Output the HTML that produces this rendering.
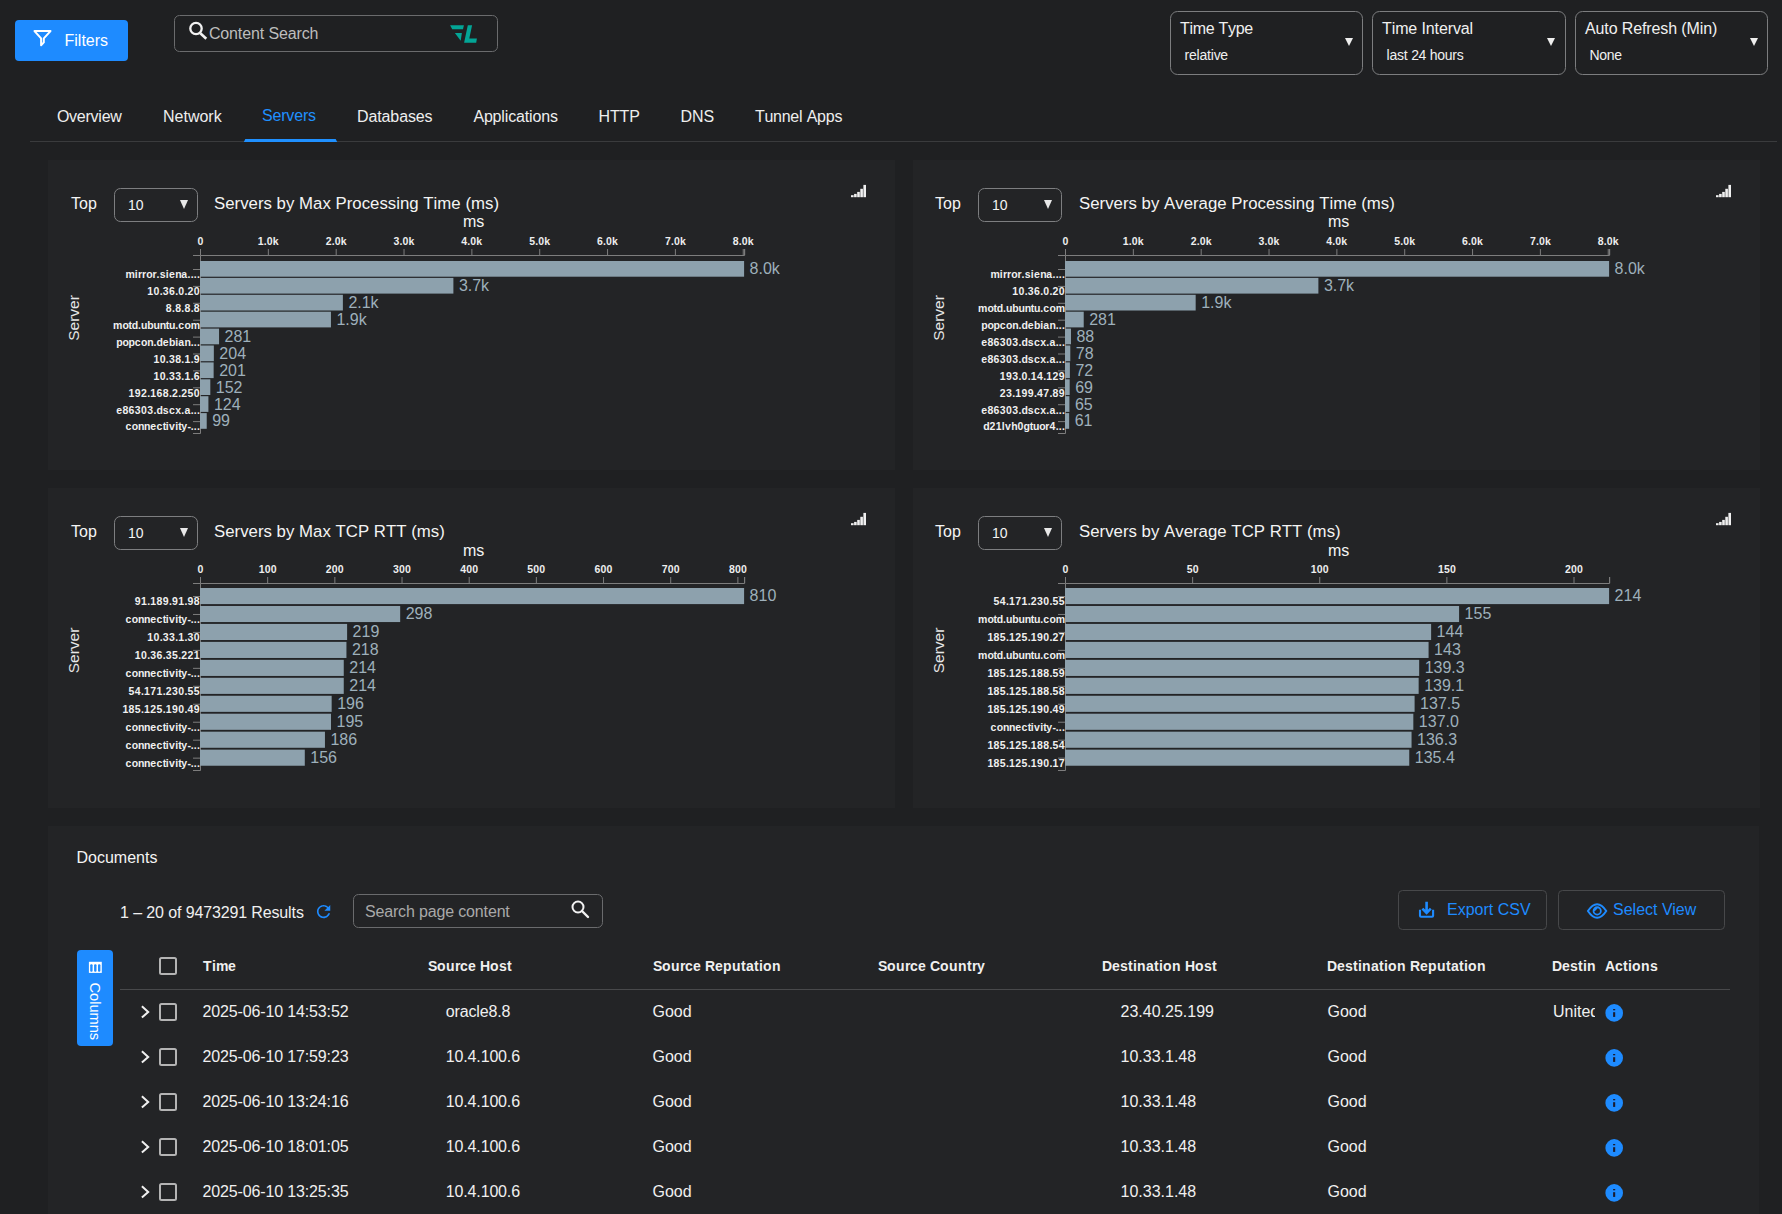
<!DOCTYPE html>
<html><head><meta charset="utf-8"><title>Servers</title>
<style>
html,body{margin:0;padding:0;background:#1f2022;width:1782px;height:1214px;overflow:hidden;}
svg{position:absolute;left:0;top:0;font-family:"Liberation Sans",sans-serif;}
</style></head><body>
<svg width="1782" height="1214" viewBox="0 0 1782 1214">
<rect x="15" y="20" width="113" height="41" rx="4" fill="#1e8bff"/>
<path d="M34.5 31.1 H50.5 L43.8 38.4 V42.4 L41.1 45.2 V38.4 Z" fill="none" stroke="#fff" stroke-width="2" stroke-linejoin="round"/>
<text x="64.5" y="46" font-size="16" fill="#fff" font-weight="normal" text-anchor="start" >Filters</text>
<rect x="174.5" y="15.5" width="323" height="36" rx="5" fill="none" stroke="#6a6b6d" stroke-width="1"/>
<circle cx="196" cy="28.5" r="5.7" fill="none" stroke="#f2f2f2" stroke-width="2.3"/><path d="M200.3 33.2 L206.3 38.8" stroke="#f2f2f2" stroke-width="2.6"/>
<text x="209.00 220.36 229.11 237.85 242.22 250.97 259.72 264.09 268.46 278.95 287.69 296.44 301.68 309.54" y="39" font-size="16" fill="#bdbdbd" font-weight="normal" >Content Search</text>
<path d="M450.1 25.2 H463.9 L463 29.3 H452.2 Z" fill="#03a596"/><path d="M454.9 32.9 H461.9 L460.7 40.8 Z" fill="#03a596"/><path d="M467.8 25.2 H472.1 L469.3 38.5 H476.9 L476.2 42.8 H464.1 Z" fill="#03a596"/>
<rect x="1170.5" y="11.5" width="192" height="63" rx="7" fill="none" stroke="#7c7d7f" stroke-width="1"/>
<text x="1180.00 1189.43 1192.86 1205.72 1214.31 1218.60 1228.03 1235.75 1244.34" y="33.8" font-size="16" fill="#f0f0f0" font-weight="normal" >Time Type</text>
<text x="1184.50 1188.98 1196.45 1199.44 1206.91 1210.65 1213.63 1220.35" y="60" font-size="14" fill="#f0f0f0" font-weight="normal" >relative</text>
<path d="M1345 38 H1353 L1349 46 Z" fill="#eeeeee"/>
<rect x="1372.5" y="11.5" width="193" height="63" rx="7" fill="none" stroke="#7c7d7f" stroke-width="1"/>
<text x="1382.00 1391.63 1395.13 1408.26 1417.02 1421.40 1425.78 1434.54 1438.92 1447.69 1452.94 1460.82 1469.58" y="33.8" font-size="16" fill="#f0f0f0" font-weight="normal" >Time Interval</text>
<text x="1386.50 1389.49 1396.96 1403.68 1407.41 1411.15 1418.62 1426.10 1429.83 1437.31 1444.78 1452.26 1456.73" y="60" font-size="14" fill="#f0f0f0" font-weight="normal" >last 24 hours</text>
<path d="M1547 38 H1555 L1551 46 Z" fill="#eeeeee"/>
<rect x="1575.5" y="11.5" width="192" height="63" rx="7" fill="none" stroke="#7c7d7f" stroke-width="1"/>
<text x="1585.00 1595.51 1604.28 1608.66 1617.42 1621.80 1633.18 1641.95 1646.32 1651.57 1660.34 1668.22 1676.98 1681.36 1686.61 1699.74 1703.24 1712.00" y="33.8" font-size="16" fill="#f0f0f0" font-weight="normal" >Auto Refresh (Min)</text>
<text x="1589.50 1599.21 1606.68 1614.16" y="60" font-size="14" fill="#f0f0f0" font-weight="normal" >None</text>
<path d="M1750 38 H1758 L1754 46 Z" fill="#eeeeee"/>
<text x="57.00 69.03 76.77 85.38 90.53 98.26 101.70 110.31" y="121.5" font-size="16" fill="#eeeeee" font-weight="normal" >Overview</text>
<text x="163" y="121.5" font-size="16" fill="#eeeeee" font-weight="normal" text-anchor="start" >Network</text>
<text x="262.00 272.44 281.14 286.35 294.17 302.88 308.09" y="120.5" font-size="16" fill="#1f90ff" font-weight="normal" >Servers</text>
<text x="357.00 368.40 377.19 381.57 390.36 399.14 407.92 415.82 424.60" y="121.5" font-size="16" fill="#eeeeee" font-weight="normal" >Databases</text>
<text x="473.50 483.93 492.62 501.31 504.79 508.26 516.08 524.77 529.11 532.59 541.28 549.97" y="121.5" font-size="16" fill="#eeeeee" font-weight="normal" >Applications</text>
<text x="598.50 609.94 619.61 629.29" y="121.5" font-size="16" fill="#eeeeee" font-weight="normal" >HTTP</text>
<text x="680.50 691.94 703.38" y="121.5" font-size="16" fill="#eeeeee" font-weight="normal" >DNS</text>
<text x="755.00 764.48 773.11 781.74 790.37 799.01 802.45 806.77 817.12 825.75 834.38" y="121.5" font-size="16" fill="#eeeeee" font-weight="normal" >Tunnel Apps</text>
<rect x="30" y="141" width="1747" height="1" fill="#3a3b3d"/>
<path d="M243.8 142 L245.3 139 H335.7 L337.2 142 Z" fill="#1f90ff"/>
<rect x="48" y="160" width="847" height="310" fill="#232426"/>
<text x="71" y="209" font-size="16" fill="#f4f4f4" font-weight="normal" text-anchor="start" >Top</text>
<rect x="114.5" y="188.5" width="83" height="33" rx="6" fill="none" stroke="#7d7e80" stroke-width="1"/>
<text x="128" y="210" font-size="14" fill="#f4f4f4" font-weight="normal" text-anchor="start" >10</text>
<path d="M180 200 H188 L184 209 Z" fill="#e8e8e8"/>
<text x="214.00 225.22 234.57 240.17 248.58 257.93 263.53 271.94 276.61 285.96 294.37 299.04 313.05 322.41 330.81 335.49 346.70 352.30 361.66 370.06 379.42 387.83 396.23 399.97 409.32 418.68 423.35 433.62 437.36 451.36 460.72 465.39 470.99 485.00 493.41" y="208.6" font-size="16.8" fill="#f4f4f4" font-weight="normal" >Servers by Max Processing Time (ms)</text>
<text x="463" y="227" font-size="16" fill="#f4f4f4" font-weight="normal" text-anchor="start" >ms</text>
<rect x="851.0" y="195.2" width="2.6" height="2" fill="#f0f0f0"/>
<rect x="854.1" y="193.89999999999998" width="2.6" height="3.3" fill="#f0f0f0"/>
<rect x="857.2" y="191.89999999999998" width="2.6" height="5.3" fill="#f0f0f0"/>
<rect x="860.3" y="188.79999999999998" width="2.6" height="8.4" fill="#f0f0f0"/>
<rect x="863.4" y="184.89999999999998" width="2.6" height="12.3" fill="#f0f0f0"/>
<rect x="200.00" y="249.0" width="1" height="6" fill="#7d7d7d"/>
<text x="197.50" y="245.2" font-size="10.5" fill="#eeeeee" font-weight="bold">0</text>
<rect x="267.84" y="249.0" width="1" height="6" fill="#7d7d7d"/>
<text x="257.84 263.84 266.84 272.84" y="245.2" font-size="10.5" fill="#eeeeee" font-weight="bold">1.0k</text>
<rect x="335.69" y="249.0" width="1" height="6" fill="#7d7d7d"/>
<text x="325.69 331.69 334.69 340.69" y="245.2" font-size="10.5" fill="#eeeeee" font-weight="bold">2.0k</text>
<rect x="403.53" y="249.0" width="1" height="6" fill="#7d7d7d"/>
<text x="393.53 399.53 402.53 408.53" y="245.2" font-size="10.5" fill="#eeeeee" font-weight="bold">3.0k</text>
<rect x="471.37" y="249.0" width="1" height="6" fill="#7d7d7d"/>
<text x="461.37 467.37 470.37 476.37" y="245.2" font-size="10.5" fill="#eeeeee" font-weight="bold">4.0k</text>
<rect x="539.21" y="249.0" width="1" height="6" fill="#7d7d7d"/>
<text x="529.21 535.21 538.21 544.21" y="245.2" font-size="10.5" fill="#eeeeee" font-weight="bold">5.0k</text>
<rect x="607.06" y="249.0" width="1" height="6" fill="#7d7d7d"/>
<text x="597.06 603.06 606.06 612.06" y="245.2" font-size="10.5" fill="#eeeeee" font-weight="bold">6.0k</text>
<rect x="674.90" y="249.0" width="1" height="6" fill="#7d7d7d"/>
<text x="664.90 670.90 673.90 679.90" y="245.2" font-size="10.5" fill="#eeeeee" font-weight="bold">7.0k</text>
<rect x="742.74" y="249.0" width="1" height="6" fill="#7d7d7d"/>
<text x="732.74 738.74 741.74 747.74" y="245.2" font-size="10.5" fill="#eeeeee" font-weight="bold">8.0k</text>
<rect x="744.10" y="249.0" width="1" height="6" fill="#7d7d7d"/>
<path d="M193 255.5 H200.5 V433.5 H193" fill="none" stroke="#7d7d7d" stroke-width="1"/>
<path d="M200.5 249.0 V255.5 H744.6 V249.0" fill="none" stroke="#7d7d7d" stroke-width="1"/>
<rect x="200.00" y="261.00" width="544.10" height="15.7" fill="#8da1ad"/>
<rect x="193" y="269.00" width="7" height="1" fill="#7d7d7d"/>
<text x="125.48 134.80 137.90 142.04 146.18 152.39 156.53 159.63 165.84 168.95 175.16 181.37 187.58 190.68 193.79 196.89" y="278.30" font-size="10.5" fill="#f0f0f0" font-weight="bold">mirror.siena....</text>
<text x="749.60" y="274.30" font-size="16" fill="#9eb0bb" font-weight="normal" text-anchor="start" >8.0k</text>
<rect x="200.00" y="277.90" width="253.39" height="15.7" fill="#8da1ad"/>
<rect x="193" y="285.90" width="7" height="1" fill="#7d7d7d"/>
<text x="147.22 153.43 159.64 162.74 168.95 175.16 178.27 184.48 187.58 193.79" y="295.20" font-size="10.5" fill="#f0f0f0" font-weight="bold">10.36.0.20</text>
<text x="458.89" y="291.20" font-size="16" fill="#9eb0bb" font-weight="normal" text-anchor="start" >3.7k</text>
<rect x="200.00" y="294.80" width="142.88" height="15.7" fill="#8da1ad"/>
<rect x="193" y="302.80" width="7" height="1" fill="#7d7d7d"/>
<text x="165.84 172.06 175.16 181.37 184.47 190.69 193.79" y="312.10" font-size="10.5" fill="#f0f0f0" font-weight="bold">8.8.8.8</text>
<text x="348.38" y="308.10" font-size="16" fill="#9eb0bb" font-weight="normal" text-anchor="start" >2.1k</text>
<rect x="200.00" y="311.70" width="130.94" height="15.7" fill="#8da1ad"/>
<rect x="193" y="319.70" width="7" height="1" fill="#7d7d7d"/>
<text x="113.06 122.38 128.59 131.69 137.90 141.00 147.22 153.43 159.64 165.85 168.95 175.16 178.27 184.48 190.69" y="329.00" font-size="10.5" fill="#f0f0f0" font-weight="bold">motd.ubuntu.com</text>
<text x="336.44" y="325.00" font-size="16" fill="#9eb0bb" font-weight="normal" text-anchor="start" >1.9k</text>
<rect x="200.00" y="328.60" width="19.06" height="15.7" fill="#8da1ad"/>
<rect x="193" y="336.60" width="7" height="1" fill="#7d7d7d"/>
<text x="116.17 122.38 128.59 134.80 141.01 147.22 153.43 156.53 162.74 168.95 175.16 178.27 184.48 190.69 193.79 196.90" y="345.90" font-size="10.5" fill="#f0f0f0" font-weight="bold">popcon.debian...</text>
<text x="224.56" y="341.90" font-size="16" fill="#9eb0bb" font-weight="normal" text-anchor="start" >281</text>
<rect x="200.00" y="345.50" width="13.84" height="15.7" fill="#8da1ad"/>
<rect x="193" y="353.50" width="7" height="1" fill="#7d7d7d"/>
<text x="153.43 159.64 165.85 168.95 175.16 181.37 184.48 190.69 193.79" y="362.80" font-size="10.5" fill="#f0f0f0" font-weight="bold">10.38.1.9</text>
<text x="219.34" y="358.80" font-size="16" fill="#9eb0bb" font-weight="normal" text-anchor="start" >204</text>
<rect x="200.00" y="362.40" width="13.64" height="15.7" fill="#8da1ad"/>
<rect x="193" y="370.40" width="7" height="1" fill="#7d7d7d"/>
<text x="153.43 159.64 165.85 168.95 175.16 181.37 184.48 190.69 193.79" y="379.70" font-size="10.5" fill="#f0f0f0" font-weight="bold">10.33.1.6</text>
<text x="219.14" y="375.70" font-size="16" fill="#9eb0bb" font-weight="normal" text-anchor="start" >201</text>
<rect x="200.00" y="379.30" width="10.31" height="15.7" fill="#8da1ad"/>
<rect x="193" y="387.30" width="7" height="1" fill="#7d7d7d"/>
<text x="128.59 134.80 141.01 147.22 150.32 156.53 162.74 168.95 172.06 178.27 181.37 187.58 193.79" y="396.60" font-size="10.5" fill="#f0f0f0" font-weight="bold">192.168.2.250</text>
<text x="215.81" y="392.60" font-size="16" fill="#9eb0bb" font-weight="normal" text-anchor="start" >152</text>
<rect x="200.00" y="396.20" width="8.41" height="15.7" fill="#8da1ad"/>
<rect x="193" y="404.20" width="7" height="1" fill="#7d7d7d"/>
<text x="116.17 122.38 128.59 134.80 141.01 147.22 153.43 156.53 162.74 168.95 175.16 181.37 184.48 190.69 193.79 196.90" y="413.50" font-size="10.5" fill="#f0f0f0" font-weight="bold">e86303.dscx.a...</text>
<text x="213.91" y="409.50" font-size="16" fill="#9eb0bb" font-weight="normal" text-anchor="start" >124</text>
<rect x="200.00" y="413.10" width="6.72" height="15.7" fill="#8da1ad"/>
<rect x="193" y="421.10" width="7" height="1" fill="#7d7d7d"/>
<text x="125.48 131.69 137.90 144.11 150.32 156.53 162.74 165.85 168.95 175.16 178.27 181.37 187.58 190.69 193.79 196.90" y="430.40" font-size="10.5" fill="#f0f0f0" font-weight="bold">connectivity-...</text>
<text x="212.22" y="426.40" font-size="16" fill="#9eb0bb" font-weight="normal" text-anchor="start" >99</text>
<text transform="translate(79,318.0) rotate(-90)" font-size="15.5" fill="#e8e8e8" text-anchor="middle">Server</text>
<rect x="913" y="160" width="847" height="310" fill="#232426"/>
<text x="935" y="209" font-size="16" fill="#f4f4f4" font-weight="normal" text-anchor="start" >Top</text>
<rect x="978.5" y="188.5" width="83" height="33" rx="6" fill="none" stroke="#7d7e80" stroke-width="1"/>
<text x="992" y="210" font-size="14" fill="#f4f4f4" font-weight="normal" text-anchor="start" >10</text>
<path d="M1044 200 H1052 L1048 209 Z" fill="#e8e8e8"/>
<text x="1079.00 1090.22 1099.57 1105.17 1113.58 1122.93 1128.53 1136.94 1141.61 1150.96 1159.37 1164.04 1175.26 1183.67 1193.02 1198.62 1207.98 1217.33 1226.68 1231.35 1242.57 1248.17 1257.52 1265.93 1275.28 1283.69 1292.10 1295.84 1305.19 1314.54 1319.21 1329.49 1333.22 1347.23 1356.58 1361.26 1366.86 1380.86 1389.27" y="208.6" font-size="16.8" fill="#f4f4f4" font-weight="normal" >Servers by Average Processing Time (ms)</text>
<text x="1328" y="227" font-size="16" fill="#f4f4f4" font-weight="normal" text-anchor="start" >ms</text>
<rect x="1716.0" y="195.2" width="2.6" height="2" fill="#f0f0f0"/>
<rect x="1719.1" y="193.89999999999998" width="2.6" height="3.3" fill="#f0f0f0"/>
<rect x="1722.2" y="191.89999999999998" width="2.6" height="5.3" fill="#f0f0f0"/>
<rect x="1725.3" y="188.79999999999998" width="2.6" height="8.4" fill="#f0f0f0"/>
<rect x="1728.4" y="184.89999999999998" width="2.6" height="12.3" fill="#f0f0f0"/>
<rect x="1065.00" y="249.0" width="1" height="6" fill="#7d7d7d"/>
<text x="1062.50" y="245.2" font-size="10.5" fill="#eeeeee" font-weight="bold">0</text>
<rect x="1132.84" y="249.0" width="1" height="6" fill="#7d7d7d"/>
<text x="1122.84 1128.84 1131.84 1137.84" y="245.2" font-size="10.5" fill="#eeeeee" font-weight="bold">1.0k</text>
<rect x="1200.69" y="249.0" width="1" height="6" fill="#7d7d7d"/>
<text x="1190.69 1196.69 1199.69 1205.69" y="245.2" font-size="10.5" fill="#eeeeee" font-weight="bold">2.0k</text>
<rect x="1268.53" y="249.0" width="1" height="6" fill="#7d7d7d"/>
<text x="1258.53 1264.53 1267.53 1273.53" y="245.2" font-size="10.5" fill="#eeeeee" font-weight="bold">3.0k</text>
<rect x="1336.37" y="249.0" width="1" height="6" fill="#7d7d7d"/>
<text x="1326.37 1332.37 1335.37 1341.37" y="245.2" font-size="10.5" fill="#eeeeee" font-weight="bold">4.0k</text>
<rect x="1404.21" y="249.0" width="1" height="6" fill="#7d7d7d"/>
<text x="1394.21 1400.21 1403.21 1409.21" y="245.2" font-size="10.5" fill="#eeeeee" font-weight="bold">5.0k</text>
<rect x="1472.06" y="249.0" width="1" height="6" fill="#7d7d7d"/>
<text x="1462.06 1468.06 1471.06 1477.06" y="245.2" font-size="10.5" fill="#eeeeee" font-weight="bold">6.0k</text>
<rect x="1539.90" y="249.0" width="1" height="6" fill="#7d7d7d"/>
<text x="1529.90 1535.90 1538.90 1544.90" y="245.2" font-size="10.5" fill="#eeeeee" font-weight="bold">7.0k</text>
<rect x="1607.74" y="249.0" width="1" height="6" fill="#7d7d7d"/>
<text x="1597.74 1603.74 1606.74 1612.74" y="245.2" font-size="10.5" fill="#eeeeee" font-weight="bold">8.0k</text>
<rect x="1609.10" y="249.0" width="1" height="6" fill="#7d7d7d"/>
<path d="M1058 255.5 H1065.5 V433.5 H1058" fill="none" stroke="#7d7d7d" stroke-width="1"/>
<path d="M1065.5 249.0 V255.5 H1609.6 V249.0" fill="none" stroke="#7d7d7d" stroke-width="1"/>
<rect x="1065.00" y="261.00" width="544.10" height="15.7" fill="#8da1ad"/>
<rect x="1058" y="269.00" width="7" height="1" fill="#7d7d7d"/>
<text x="990.48 999.80 1002.90 1007.04 1011.18 1017.39 1021.53 1024.63 1030.85 1033.95 1040.16 1046.37 1052.58 1055.69 1058.79 1061.90" y="278.30" font-size="10.5" fill="#f0f0f0" font-weight="bold">mirror.siena....</text>
<text x="1614.60" y="274.30" font-size="16" fill="#9eb0bb" font-weight="normal" text-anchor="start" >8.0k</text>
<rect x="1065.00" y="277.90" width="253.39" height="15.7" fill="#8da1ad"/>
<rect x="1058" y="285.90" width="7" height="1" fill="#7d7d7d"/>
<text x="1012.22 1018.43 1024.63 1027.74 1033.95 1040.16 1043.27 1049.48 1052.58 1058.79" y="295.20" font-size="10.5" fill="#f0f0f0" font-weight="bold">10.36.0.20</text>
<text x="1323.89" y="291.20" font-size="16" fill="#9eb0bb" font-weight="normal" text-anchor="start" >3.7k</text>
<rect x="1065.00" y="294.80" width="130.67" height="15.7" fill="#8da1ad"/>
<rect x="1058" y="302.80" width="7" height="1" fill="#7d7d7d"/>
<text x="978.06 987.38 993.59 996.69 1002.90 1006.01 1012.22 1018.43 1024.64 1030.85 1033.95 1040.16 1043.27 1049.48 1055.69" y="312.10" font-size="10.5" fill="#f0f0f0" font-weight="bold">motd.ubuntu.com</text>
<text x="1201.17" y="308.10" font-size="16" fill="#9eb0bb" font-weight="normal" text-anchor="start" >1.9k</text>
<rect x="1065.00" y="311.70" width="18.72" height="15.7" fill="#8da1ad"/>
<rect x="1058" y="319.70" width="7" height="1" fill="#7d7d7d"/>
<text x="981.16 987.38 993.59 999.80 1006.01 1012.22 1018.43 1021.53 1027.74 1033.95 1040.16 1043.27 1049.48 1055.69 1058.79 1061.90" y="329.00" font-size="10.5" fill="#f0f0f0" font-weight="bold">popcon.debian...</text>
<text x="1089.22" y="325.00" font-size="16" fill="#9eb0bb" font-weight="normal" text-anchor="start" >281</text>
<rect x="1065.00" y="328.60" width="5.97" height="15.7" fill="#8da1ad"/>
<rect x="1058" y="336.60" width="7" height="1" fill="#7d7d7d"/>
<text x="981.16 987.38 993.59 999.80 1006.01 1012.22 1018.43 1021.53 1027.74 1033.95 1040.16 1046.37 1049.48 1055.69 1058.79 1061.90" y="345.90" font-size="10.5" fill="#f0f0f0" font-weight="bold">e86303.dscx.a...</text>
<text x="1076.47" y="341.90" font-size="16" fill="#9eb0bb" font-weight="normal" text-anchor="start" >88</text>
<rect x="1065.00" y="345.50" width="5.29" height="15.7" fill="#8da1ad"/>
<rect x="1058" y="353.50" width="7" height="1" fill="#7d7d7d"/>
<text x="981.16 987.38 993.59 999.80 1006.01 1012.22 1018.43 1021.53 1027.74 1033.95 1040.16 1046.37 1049.48 1055.69 1058.79 1061.90" y="362.80" font-size="10.5" fill="#f0f0f0" font-weight="bold">e86303.dscx.a...</text>
<text x="1075.79" y="358.80" font-size="16" fill="#9eb0bb" font-weight="normal" text-anchor="start" >78</text>
<rect x="1065.00" y="362.40" width="4.88" height="15.7" fill="#8da1ad"/>
<rect x="1058" y="370.40" width="7" height="1" fill="#7d7d7d"/>
<text x="999.80 1006.01 1012.22 1018.43 1021.53 1027.74 1030.85 1037.06 1043.27 1046.37 1052.58 1058.79" y="379.70" font-size="10.5" fill="#f0f0f0" font-weight="bold">193.0.14.129</text>
<text x="1075.38" y="375.70" font-size="16" fill="#9eb0bb" font-weight="normal" text-anchor="start" >72</text>
<rect x="1065.00" y="379.30" width="4.68" height="15.7" fill="#8da1ad"/>
<rect x="1058" y="387.30" width="7" height="1" fill="#7d7d7d"/>
<text x="999.80 1006.01 1012.22 1015.32 1021.53 1027.74 1033.95 1037.06 1043.27 1049.48 1052.58 1058.79" y="396.60" font-size="10.5" fill="#f0f0f0" font-weight="bold">23.199.47.89</text>
<text x="1075.18" y="392.60" font-size="16" fill="#9eb0bb" font-weight="normal" text-anchor="start" >69</text>
<rect x="1065.00" y="396.20" width="4.41" height="15.7" fill="#8da1ad"/>
<rect x="1058" y="404.20" width="7" height="1" fill="#7d7d7d"/>
<text x="981.16 987.38 993.59 999.80 1006.01 1012.22 1018.43 1021.53 1027.74 1033.95 1040.16 1046.37 1049.48 1055.69 1058.79 1061.90" y="413.50" font-size="10.5" fill="#f0f0f0" font-weight="bold">e86303.dscx.a...</text>
<text x="1074.91" y="409.50" font-size="16" fill="#9eb0bb" font-weight="normal" text-anchor="start" >65</text>
<rect x="1065.00" y="413.10" width="4.14" height="15.7" fill="#8da1ad"/>
<rect x="1058" y="421.10" width="7" height="1" fill="#7d7d7d"/>
<text x="983.24 989.45 995.66 1001.87 1004.97 1011.18 1017.39 1023.60 1029.81 1032.92 1039.13 1045.34 1049.48 1055.69 1058.79 1061.90" y="430.40" font-size="10.5" fill="#f0f0f0" font-weight="bold">d21lvh0gtuor4...</text>
<text x="1074.64" y="426.40" font-size="16" fill="#9eb0bb" font-weight="normal" text-anchor="start" >61</text>
<text transform="translate(944,318.0) rotate(-90)" font-size="15.5" fill="#e8e8e8" text-anchor="middle">Server</text>
<rect x="48" y="488" width="847" height="320" fill="#232426"/>
<text x="71" y="537" font-size="16" fill="#f4f4f4" font-weight="normal" text-anchor="start" >Top</text>
<rect x="114.5" y="516.5" width="83" height="33" rx="6" fill="none" stroke="#7d7e80" stroke-width="1"/>
<text x="128" y="538" font-size="14" fill="#f4f4f4" font-weight="normal" text-anchor="start" >10</text>
<path d="M180 528 H188 L184 537 Z" fill="#e8e8e8"/>
<text x="214.00 225.22 234.57 240.17 248.58 257.93 263.53 271.94 276.61 285.96 294.37 299.04 313.05 322.41 330.81 335.49 345.76 357.90 369.12 373.79 385.94 396.21 406.48 411.15 416.75 430.76 439.17" y="536.6" font-size="16.8" fill="#f4f4f4" font-weight="normal" >Servers by Max TCP RTT (ms)</text>
<text x="463" y="555.8" font-size="16" fill="#f4f4f4" font-weight="normal" text-anchor="start" >ms</text>
<rect x="851.0" y="523.2" width="2.6" height="2" fill="#f0f0f0"/>
<rect x="854.1" y="521.9000000000001" width="2.6" height="3.3" fill="#f0f0f0"/>
<rect x="857.2" y="519.9000000000001" width="2.6" height="5.3" fill="#f0f0f0"/>
<rect x="860.3" y="516.8000000000001" width="2.6" height="8.4" fill="#f0f0f0"/>
<rect x="863.4" y="512.9000000000001" width="2.6" height="12.3" fill="#f0f0f0"/>
<rect x="200.00" y="577.0" width="1" height="6" fill="#7d7d7d"/>
<text x="197.50" y="573.2" font-size="10.5" fill="#eeeeee" font-weight="bold">0</text>
<rect x="267.17" y="577.0" width="1" height="6" fill="#7d7d7d"/>
<text x="258.67 264.67 270.67" y="573.2" font-size="10.5" fill="#eeeeee" font-weight="bold">100</text>
<rect x="334.35" y="577.0" width="1" height="6" fill="#7d7d7d"/>
<text x="325.85 331.85 337.85" y="573.2" font-size="10.5" fill="#eeeeee" font-weight="bold">200</text>
<rect x="401.52" y="577.0" width="1" height="6" fill="#7d7d7d"/>
<text x="393.02 399.02 405.02" y="573.2" font-size="10.5" fill="#eeeeee" font-weight="bold">300</text>
<rect x="468.69" y="577.0" width="1" height="6" fill="#7d7d7d"/>
<text x="460.19 466.19 472.19" y="573.2" font-size="10.5" fill="#eeeeee" font-weight="bold">400</text>
<rect x="535.86" y="577.0" width="1" height="6" fill="#7d7d7d"/>
<text x="527.36 533.36 539.36" y="573.2" font-size="10.5" fill="#eeeeee" font-weight="bold">500</text>
<rect x="603.04" y="577.0" width="1" height="6" fill="#7d7d7d"/>
<text x="594.54 600.54 606.54" y="573.2" font-size="10.5" fill="#eeeeee" font-weight="bold">600</text>
<rect x="670.21" y="577.0" width="1" height="6" fill="#7d7d7d"/>
<text x="661.71 667.71 673.71" y="573.2" font-size="10.5" fill="#eeeeee" font-weight="bold">700</text>
<rect x="737.38" y="577.0" width="1" height="6" fill="#7d7d7d"/>
<text x="728.88 734.88 740.88" y="573.2" font-size="10.5" fill="#eeeeee" font-weight="bold">800</text>
<rect x="744.10" y="577.0" width="1" height="6" fill="#7d7d7d"/>
<path d="M193 583.5 H200.5 V770.5 H193" fill="none" stroke="#7d7d7d" stroke-width="1"/>
<path d="M200.5 577.0 V583.5 H744.6 V577.0" fill="none" stroke="#7d7d7d" stroke-width="1"/>
<rect x="200.00" y="588.00" width="544.10" height="16.1" fill="#8da1ad"/>
<rect x="193" y="596.00" width="7" height="1" fill="#7d7d7d"/>
<text x="134.80 141.01 147.22 150.32 156.53 162.74 168.95 172.06 178.27 184.48 187.58 193.79" y="605.30" font-size="10.5" fill="#f0f0f0" font-weight="bold">91.189.91.98</text>
<text x="749.60" y="600.90" font-size="16" fill="#9eb0bb" font-weight="normal" text-anchor="start" >810</text>
<rect x="200.00" y="605.96" width="200.18" height="16.1" fill="#8da1ad"/>
<rect x="193" y="613.96" width="7" height="1" fill="#7d7d7d"/>
<text x="125.48 131.69 137.90 144.11 150.32 156.53 162.74 165.85 168.95 175.16 178.27 181.37 187.58 190.69 193.79 196.90" y="623.26" font-size="10.5" fill="#f0f0f0" font-weight="bold">connectivity-...</text>
<text x="405.68" y="618.86" font-size="16" fill="#9eb0bb" font-weight="normal" text-anchor="start" >298</text>
<rect x="200.00" y="623.92" width="147.11" height="16.1" fill="#8da1ad"/>
<rect x="193" y="631.92" width="7" height="1" fill="#7d7d7d"/>
<text x="147.22 153.43 159.64 162.74 168.95 175.16 178.27 184.48 187.58 193.79" y="641.22" font-size="10.5" fill="#f0f0f0" font-weight="bold">10.33.1.30</text>
<text x="352.61" y="636.82" font-size="16" fill="#9eb0bb" font-weight="normal" text-anchor="start" >219</text>
<rect x="200.00" y="641.88" width="146.44" height="16.1" fill="#8da1ad"/>
<rect x="193" y="649.88" width="7" height="1" fill="#7d7d7d"/>
<text x="134.80 141.01 147.22 150.32 156.53 162.74 165.85 172.06 178.27 181.37 187.58 193.79" y="659.18" font-size="10.5" fill="#f0f0f0" font-weight="bold">10.36.35.221</text>
<text x="351.94" y="654.78" font-size="16" fill="#9eb0bb" font-weight="normal" text-anchor="start" >218</text>
<rect x="200.00" y="659.84" width="143.75" height="16.1" fill="#8da1ad"/>
<rect x="193" y="667.84" width="7" height="1" fill="#7d7d7d"/>
<text x="125.48 131.69 137.90 144.11 150.32 156.53 162.74 165.85 168.95 175.16 178.27 181.37 187.58 190.69 193.79 196.90" y="677.14" font-size="10.5" fill="#f0f0f0" font-weight="bold">connectivity-...</text>
<text x="349.25" y="672.74" font-size="16" fill="#9eb0bb" font-weight="normal" text-anchor="start" >214</text>
<rect x="200.00" y="677.80" width="143.75" height="16.1" fill="#8da1ad"/>
<rect x="193" y="685.80" width="7" height="1" fill="#7d7d7d"/>
<text x="128.59 134.80 141.01 144.11 150.32 156.53 162.74 165.85 172.06 178.27 184.48 187.58 193.79" y="695.10" font-size="10.5" fill="#f0f0f0" font-weight="bold">54.171.230.55</text>
<text x="349.25" y="690.70" font-size="16" fill="#9eb0bb" font-weight="normal" text-anchor="start" >214</text>
<rect x="200.00" y="695.76" width="131.66" height="16.1" fill="#8da1ad"/>
<rect x="193" y="703.76" width="7" height="1" fill="#7d7d7d"/>
<text x="122.38 128.59 134.80 141.01 144.11 150.32 156.53 162.74 165.85 172.06 178.27 184.48 187.58 193.79" y="713.06" font-size="10.5" fill="#f0f0f0" font-weight="bold">185.125.190.49</text>
<text x="337.16" y="708.66" font-size="16" fill="#9eb0bb" font-weight="normal" text-anchor="start" >196</text>
<rect x="200.00" y="713.72" width="130.99" height="16.1" fill="#8da1ad"/>
<rect x="193" y="721.72" width="7" height="1" fill="#7d7d7d"/>
<text x="125.48 131.69 137.90 144.11 150.32 156.53 162.74 165.85 168.95 175.16 178.27 181.37 187.58 190.69 193.79 196.90" y="731.02" font-size="10.5" fill="#f0f0f0" font-weight="bold">connectivity-...</text>
<text x="336.49" y="726.62" font-size="16" fill="#9eb0bb" font-weight="normal" text-anchor="start" >195</text>
<rect x="200.00" y="731.68" width="124.94" height="16.1" fill="#8da1ad"/>
<rect x="193" y="739.68" width="7" height="1" fill="#7d7d7d"/>
<text x="125.48 131.69 137.90 144.11 150.32 156.53 162.74 165.85 168.95 175.16 178.27 181.37 187.58 190.69 193.79 196.90" y="748.98" font-size="10.5" fill="#f0f0f0" font-weight="bold">connectivity-...</text>
<text x="330.44" y="744.58" font-size="16" fill="#9eb0bb" font-weight="normal" text-anchor="start" >186</text>
<rect x="200.00" y="749.64" width="104.79" height="16.1" fill="#8da1ad"/>
<rect x="193" y="757.64" width="7" height="1" fill="#7d7d7d"/>
<text x="125.48 131.69 137.90 144.11 150.32 156.53 162.74 165.85 168.95 175.16 178.27 181.37 187.58 190.69 193.79 196.90" y="766.94" font-size="10.5" fill="#f0f0f0" font-weight="bold">connectivity-...</text>
<text x="310.29" y="762.54" font-size="16" fill="#9eb0bb" font-weight="normal" text-anchor="start" >156</text>
<text transform="translate(79,650.5) rotate(-90)" font-size="15.5" fill="#e8e8e8" text-anchor="middle">Server</text>
<rect x="913" y="488" width="847" height="320" fill="#232426"/>
<text x="935" y="537" font-size="16" fill="#f4f4f4" font-weight="normal" text-anchor="start" >Top</text>
<rect x="978.5" y="516.5" width="83" height="33" rx="6" fill="none" stroke="#7d7e80" stroke-width="1"/>
<text x="992" y="538" font-size="14" fill="#f4f4f4" font-weight="normal" text-anchor="start" >10</text>
<path d="M1044 528 H1052 L1048 537 Z" fill="#e8e8e8"/>
<text x="1079.00 1090.22 1099.57 1105.17 1113.58 1122.93 1128.53 1136.94 1141.61 1150.96 1159.37 1164.04 1175.26 1183.67 1193.02 1198.62 1207.98 1217.33 1226.68 1231.35 1241.63 1253.77 1264.99 1269.66 1281.80 1292.08 1302.35 1307.02 1312.62 1326.63 1335.04" y="536.6" font-size="16.8" fill="#f4f4f4" font-weight="normal" >Servers by Average TCP RTT (ms)</text>
<text x="1328" y="555.8" font-size="16" fill="#f4f4f4" font-weight="normal" text-anchor="start" >ms</text>
<rect x="1716.0" y="523.2" width="2.6" height="2" fill="#f0f0f0"/>
<rect x="1719.1" y="521.9000000000001" width="2.6" height="3.3" fill="#f0f0f0"/>
<rect x="1722.2" y="519.9000000000001" width="2.6" height="5.3" fill="#f0f0f0"/>
<rect x="1725.3" y="516.8000000000001" width="2.6" height="8.4" fill="#f0f0f0"/>
<rect x="1728.4" y="512.9000000000001" width="2.6" height="12.3" fill="#f0f0f0"/>
<rect x="1065.00" y="577.0" width="1" height="6" fill="#7d7d7d"/>
<text x="1062.50" y="573.2" font-size="10.5" fill="#eeeeee" font-weight="bold">0</text>
<rect x="1192.13" y="577.0" width="1" height="6" fill="#7d7d7d"/>
<text x="1186.63 1192.63" y="573.2" font-size="10.5" fill="#eeeeee" font-weight="bold">50</text>
<rect x="1319.25" y="577.0" width="1" height="6" fill="#7d7d7d"/>
<text x="1310.75 1316.75 1322.75" y="573.2" font-size="10.5" fill="#eeeeee" font-weight="bold">100</text>
<rect x="1446.38" y="577.0" width="1" height="6" fill="#7d7d7d"/>
<text x="1437.88 1443.88 1449.88" y="573.2" font-size="10.5" fill="#eeeeee" font-weight="bold">150</text>
<rect x="1573.50" y="577.0" width="1" height="6" fill="#7d7d7d"/>
<text x="1565.00 1571.00 1577.00" y="573.2" font-size="10.5" fill="#eeeeee" font-weight="bold">200</text>
<rect x="1609.10" y="577.0" width="1" height="6" fill="#7d7d7d"/>
<path d="M1058 583.5 H1065.5 V770.5 H1058" fill="none" stroke="#7d7d7d" stroke-width="1"/>
<path d="M1065.5 577.0 V583.5 H1609.6 V577.0" fill="none" stroke="#7d7d7d" stroke-width="1"/>
<rect x="1065.00" y="588.00" width="544.10" height="16.1" fill="#8da1ad"/>
<rect x="1058" y="596.00" width="7" height="1" fill="#7d7d7d"/>
<text x="993.59 999.80 1006.01 1009.11 1015.32 1021.53 1027.74 1030.85 1037.06 1043.27 1049.48 1052.58 1058.79" y="605.30" font-size="10.5" fill="#f0f0f0" font-weight="bold">54.171.230.55</text>
<text x="1614.60" y="600.90" font-size="16" fill="#9eb0bb" font-weight="normal" text-anchor="start" >214</text>
<rect x="1065.00" y="605.96" width="394.09" height="16.1" fill="#8da1ad"/>
<rect x="1058" y="613.96" width="7" height="1" fill="#7d7d7d"/>
<text x="978.06 987.38 993.59 996.69 1002.90 1006.01 1012.22 1018.43 1024.64 1030.85 1033.95 1040.16 1043.27 1049.48 1055.69" y="623.26" font-size="10.5" fill="#f0f0f0" font-weight="bold">motd.ubuntu.com</text>
<text x="1464.59" y="618.86" font-size="16" fill="#9eb0bb" font-weight="normal" text-anchor="start" >155</text>
<rect x="1065.00" y="623.92" width="366.12" height="16.1" fill="#8da1ad"/>
<rect x="1058" y="631.92" width="7" height="1" fill="#7d7d7d"/>
<text x="987.38 993.59 999.80 1006.01 1009.11 1015.32 1021.53 1027.74 1030.85 1037.06 1043.27 1049.48 1052.58 1058.79" y="641.22" font-size="10.5" fill="#f0f0f0" font-weight="bold">185.125.190.27</text>
<text x="1436.62" y="636.82" font-size="16" fill="#9eb0bb" font-weight="normal" text-anchor="start" >144</text>
<rect x="1065.00" y="641.88" width="363.58" height="16.1" fill="#8da1ad"/>
<rect x="1058" y="649.88" width="7" height="1" fill="#7d7d7d"/>
<text x="978.06 987.38 993.59 996.69 1002.90 1006.01 1012.22 1018.43 1024.64 1030.85 1033.95 1040.16 1043.27 1049.48 1055.69" y="659.18" font-size="10.5" fill="#f0f0f0" font-weight="bold">motd.ubuntu.com</text>
<text x="1434.08" y="654.78" font-size="16" fill="#9eb0bb" font-weight="normal" text-anchor="start" >143</text>
<rect x="1065.00" y="659.84" width="354.17" height="16.1" fill="#8da1ad"/>
<rect x="1058" y="667.84" width="7" height="1" fill="#7d7d7d"/>
<text x="987.38 993.59 999.80 1006.01 1009.11 1015.32 1021.53 1027.74 1030.85 1037.06 1043.27 1049.48 1052.58 1058.79" y="677.14" font-size="10.5" fill="#f0f0f0" font-weight="bold">185.125.188.59</text>
<text x="1424.67" y="672.74" font-size="16" fill="#9eb0bb" font-weight="normal" text-anchor="start" >139.3</text>
<rect x="1065.00" y="677.80" width="353.66" height="16.1" fill="#8da1ad"/>
<rect x="1058" y="685.80" width="7" height="1" fill="#7d7d7d"/>
<text x="987.38 993.59 999.80 1006.01 1009.11 1015.32 1021.53 1027.74 1030.85 1037.06 1043.27 1049.48 1052.58 1058.79" y="695.10" font-size="10.5" fill="#f0f0f0" font-weight="bold">185.125.188.58</text>
<text x="1424.16" y="690.70" font-size="16" fill="#9eb0bb" font-weight="normal" text-anchor="start" >139.1</text>
<rect x="1065.00" y="695.76" width="349.60" height="16.1" fill="#8da1ad"/>
<rect x="1058" y="703.76" width="7" height="1" fill="#7d7d7d"/>
<text x="987.38 993.59 999.80 1006.01 1009.11 1015.32 1021.53 1027.74 1030.85 1037.06 1043.27 1049.48 1052.58 1058.79" y="713.06" font-size="10.5" fill="#f0f0f0" font-weight="bold">185.125.190.49</text>
<text x="1420.10" y="708.66" font-size="16" fill="#9eb0bb" font-weight="normal" text-anchor="start" >137.5</text>
<rect x="1065.00" y="713.72" width="348.33" height="16.1" fill="#8da1ad"/>
<rect x="1058" y="721.72" width="7" height="1" fill="#7d7d7d"/>
<text x="990.48 996.69 1002.90 1009.11 1015.32 1021.53 1027.74 1030.85 1033.95 1040.16 1043.27 1046.37 1052.58 1055.69 1058.79 1061.90" y="731.02" font-size="10.5" fill="#f0f0f0" font-weight="bold">connectivity-...</text>
<text x="1418.83" y="726.62" font-size="16" fill="#9eb0bb" font-weight="normal" text-anchor="start" >137.0</text>
<rect x="1065.00" y="731.68" width="346.55" height="16.1" fill="#8da1ad"/>
<rect x="1058" y="739.68" width="7" height="1" fill="#7d7d7d"/>
<text x="987.38 993.59 999.80 1006.01 1009.11 1015.32 1021.53 1027.74 1030.85 1037.06 1043.27 1049.48 1052.58 1058.79" y="748.98" font-size="10.5" fill="#f0f0f0" font-weight="bold">185.125.188.54</text>
<text x="1417.05" y="744.58" font-size="16" fill="#9eb0bb" font-weight="normal" text-anchor="start" >136.3</text>
<rect x="1065.00" y="749.64" width="344.26" height="16.1" fill="#8da1ad"/>
<rect x="1058" y="757.64" width="7" height="1" fill="#7d7d7d"/>
<text x="987.38 993.59 999.80 1006.01 1009.11 1015.32 1021.53 1027.74 1030.85 1037.06 1043.27 1049.48 1052.58 1058.79" y="766.94" font-size="10.5" fill="#f0f0f0" font-weight="bold">185.125.190.17</text>
<text x="1414.76" y="762.54" font-size="16" fill="#9eb0bb" font-weight="normal" text-anchor="start" >135.4</text>
<text transform="translate(944,650.5) rotate(-90)" font-size="15.5" fill="#e8e8e8" text-anchor="middle">Server</text>
<rect x="48" y="826" width="1711" height="400" fill="#232426"/>
<text x="76.5" y="863" font-size="16" fill="#f4f4f4" font-weight="normal" text-anchor="start" >Documents</text>
<text x="120.00 128.76 133.13 141.89 146.26 155.02 163.77 168.15 176.90 181.28 185.65 194.41 203.16 211.92 220.68 229.43 238.19 246.94 251.32 262.69 271.44 279.32 288.07 291.57 295.94" y="918" font-size="16" fill="#f0f0f0" font-weight="normal" >1 – 20 of 9473291 Results</text>
<path transform="translate(313.6,901.6) scale(0.833)" d="M17.65 6.35C16.2 4.9 14.21 4 12 4c-4.42 0-7.99 3.58-7.99 8s3.57 8 7.99 8c3.73 0 6.84-2.55 7.73-6h-2.08c-.82 2.33-3.04 4-5.650 4-3.31 0-6-2.69-6-6s2.69-6 6-6c1.66 0 3.14.69 4.22 1.78L13 11h7V4l-2.35 2.35z" fill="#1e8bff"/>
<rect x="353.5" y="894.5" width="249" height="33" rx="5" fill="none" stroke="#6a6b6d" stroke-width="1"/>
<text x="365.00 375.46 384.18 392.90 398.12 405.96 414.68 419.04 427.76 436.48 445.20 453.92 458.28 466.12 474.84 483.56 487.91 496.63 505.35" y="916.7" font-size="16" fill="#a9a9a9" font-weight="normal" >Search page content</text>
<circle cx="578" cy="907" r="5.5" fill="none" stroke="#f2f2f2" stroke-width="2"/><path d="M582 911 L588 917" stroke="#f2f2f2" stroke-width="2.4" stroke-linecap="round"/>
<rect x="1398.5" y="890.5" width="148" height="39" rx="4" fill="none" stroke="#47484a" stroke-width="1"/>
<path d="M1426.6 901.8 V912 M1422.4 908.6 L1426.6 912.8 L1430.8 908.6" fill="none" stroke="#1e8bff" stroke-width="2.6"/><path d="M1420 909.8 V915.8 Q1420 916.8 1421 916.8 H1432.1 Q1433.1 916.8 1433.1 915.8 V909.8" fill="none" stroke="#1e8bff" stroke-width="2.1"/>
<text x="1447" y="914.7" font-size="16" fill="#1e8bff" font-weight="normal" text-anchor="start" >Export CSV</text>
<rect x="1558.5" y="890.5" width="166" height="39" rx="4" fill="none" stroke="#47484a" stroke-width="1"/>
<path d="M1587.9 911 Q1597.1 897.4 1606.3 911 Q1597.1 924.6 1587.9 911 Z" fill="none" stroke="#1e8bff" stroke-width="2" stroke-linejoin="round"/><circle cx="1597.2" cy="910.9" r="3.65" fill="none" stroke="#1e8bff" stroke-width="1.8"/><path d="M1597.3 907.3 A3.6 3.6 0 0 0 1593.6 911 L1595 911 L1597.3 908.8 Z" fill="#1e8bff"/>
<text x="1613" y="914.7" font-size="16" fill="#1e8bff" font-weight="normal" text-anchor="start" >Select View</text>
<rect x="77" y="950" width="36" height="96" rx="4" fill="#1e8bff"/>
<rect x="88.9" y="961.8" width="12.9" height="11.1" fill="#fff"/><rect x="90.2" y="964.2" width="2.4" height="7.5" rx="1" fill="#1e8bff"/><rect x="94.1" y="964.2" width="2.4" height="7.5" rx="1" fill="#1e8bff"/><rect x="98.0" y="964.2" width="2.4" height="7.5" rx="1" fill="#1e8bff"/>
<text transform="translate(90,982.5) rotate(90)" font-size="14.6" fill="#fff">Columns</text>
<rect x="160" y="958" width="16" height="16" rx="1.5" fill="none" stroke="#b4b4b4" stroke-width="2"/>
<text x="203.00 212.00 216.00 228.00" y="971" font-size="14" fill="#f0f0f0" font-weight="bold">Time</text>
<text x="428.00 437.00 446.00 455.00 460.00 468.00 476.00 480.00 490.00 499.00 507.00" y="971" font-size="14" fill="#f0f0f0" font-weight="bold">Source Host</text>
<text x="653.00 662.00 671.00 680.00 685.00 693.00 701.00 705.00 715.00 723.00 732.00 741.00 746.00 754.00 759.00 763.00 772.00" y="971" font-size="14" fill="#f0f0f0" font-weight="bold">Source Reputation</text>
<text x="878.00 887.00 896.00 905.00 910.00 918.00 926.00 930.00 940.00 949.00 958.00 967.00 972.00 977.00" y="971" font-size="14" fill="#f0f0f0" font-weight="bold">Source Country</text>
<text x="1102.00 1112.00 1120.00 1128.00 1133.00 1137.00 1146.00 1154.00 1159.00 1163.00 1172.00 1181.00 1185.00 1195.00 1204.00 1212.00" y="971" font-size="14" fill="#f0f0f0" font-weight="bold">Destination Host</text>
<text x="1327.00 1337.00 1345.00 1353.00 1358.00 1362.00 1371.00 1379.00 1384.00 1388.00 1397.00 1406.00 1410.00 1420.00 1428.00 1437.00 1446.00 1451.00 1459.00 1464.00 1468.00 1477.00" y="971" font-size="14" fill="#f0f0f0" font-weight="bold">Destination Reputation</text>
<text x="1552.00 1562.00 1570.00 1578.00 1583.00 1587.00" y="971" font-size="14" fill="#f0f0f0" font-weight="bold">Destin</text>
<text x="1605.00 1615.00 1623.00 1628.00 1632.00 1641.00 1650.00" y="971" font-size="14" fill="#f0f0f0" font-weight="bold">Actions</text>
<rect x="120" y="989" width="1610" height="1" fill="#48494b"/>
<path d="M141.9 1006.3000000000001 L148.2 1011.9000000000001 L141.9 1017.6" fill="none" stroke="#f0f0f0" stroke-width="2"/>
<rect x="160" y="1004" width="16" height="16" rx="1.5" fill="none" stroke="#b4b4b4" stroke-width="2"/>
<text x="202.50 211.24 219.98 228.71 237.45 242.69 251.42 260.16 265.39 274.13 282.87 287.24 295.97 304.71 309.08 317.82 326.55 330.92 339.66" y="1016.7" font-size="16" fill="#f0f0f0" font-weight="normal" >2025-06-10 14:53:52</text>
<text x="445.80 454.52 459.74 468.46 476.30 479.79 488.51 497.23 501.58" y="1016.7" font-size="16" fill="#f0f0f0" font-weight="normal" >oracle8.8</text>
<text x="652.5" y="1016.7" font-size="16" fill="#f0f0f0" font-weight="normal" text-anchor="start" >Good</text>
<text x="1120.5" y="1016.7" font-size="16" fill="#f0f0f0" font-weight="normal" text-anchor="start" >23.40.25.199</text>
<text x="1327.5" y="1016.7" font-size="16" fill="#f0f0f0" font-weight="normal" text-anchor="start" >Good</text>
<svg x="1552" y="996.7" width="43" height="30"><text x="1" y="20" font-size="16" fill="#f0f0f0">United</text></svg>
<circle cx="1614.2" cy="1012.9000000000001" r="8.8" fill="#1e8bff"/><rect x="1613.1" y="1012.2" width="2.1" height="4.7" fill="#1b1c30"/><rect x="1613.1" y="1009.0" width="2.1" height="1.3" fill="#1b1c30"/>
<path d="M141.9 1051.3 L148.2 1056.9 L141.9 1062.6000000000001" fill="none" stroke="#f0f0f0" stroke-width="2"/>
<rect x="160" y="1049" width="16" height="16" rx="1.5" fill="none" stroke="#b4b4b4" stroke-width="2"/>
<text x="202.50 211.24 219.98 228.71 237.45 242.69 251.42 260.16 265.39 274.13 282.87 287.24 295.97 304.71 309.08 317.82 326.55 330.92 339.66" y="1061.7" font-size="16" fill="#f0f0f0" font-weight="normal" >2025-06-10 17:59:23</text>
<text x="445.80 454.52 463.24 467.60 476.32 480.67 489.39 498.12 506.84 511.19" y="1061.7" font-size="16" fill="#f0f0f0" font-weight="normal" >10.4.100.6</text>
<text x="652.5" y="1061.7" font-size="16" fill="#f0f0f0" font-weight="normal" text-anchor="start" >Good</text>
<text x="1120.5" y="1061.7" font-size="16" fill="#f0f0f0" font-weight="normal" text-anchor="start" >10.33.1.48</text>
<text x="1327.5" y="1061.7" font-size="16" fill="#f0f0f0" font-weight="normal" text-anchor="start" >Good</text>
<circle cx="1614.2" cy="1057.9" r="8.8" fill="#1e8bff"/><rect x="1613.1" y="1057.2" width="2.1" height="4.7" fill="#1b1c30"/><rect x="1613.1" y="1054.0" width="2.1" height="1.3" fill="#1b1c30"/>
<path d="M141.9 1096.3 L148.2 1101.9 L141.9 1107.6000000000001" fill="none" stroke="#f0f0f0" stroke-width="2"/>
<rect x="160" y="1094" width="16" height="16" rx="1.5" fill="none" stroke="#b4b4b4" stroke-width="2"/>
<text x="202.50 211.24 219.98 228.71 237.45 242.69 251.42 260.16 265.39 274.13 282.87 287.24 295.97 304.71 309.08 317.82 326.55 330.92 339.66" y="1106.7" font-size="16" fill="#f0f0f0" font-weight="normal" >2025-06-10 13:24:16</text>
<text x="445.80 454.52 463.24 467.60 476.32 480.67 489.39 498.12 506.84 511.19" y="1106.7" font-size="16" fill="#f0f0f0" font-weight="normal" >10.4.100.6</text>
<text x="652.5" y="1106.7" font-size="16" fill="#f0f0f0" font-weight="normal" text-anchor="start" >Good</text>
<text x="1120.5" y="1106.7" font-size="16" fill="#f0f0f0" font-weight="normal" text-anchor="start" >10.33.1.48</text>
<text x="1327.5" y="1106.7" font-size="16" fill="#f0f0f0" font-weight="normal" text-anchor="start" >Good</text>
<circle cx="1614.2" cy="1102.9" r="8.8" fill="#1e8bff"/><rect x="1613.1" y="1102.2" width="2.1" height="4.7" fill="#1b1c30"/><rect x="1613.1" y="1099.0" width="2.1" height="1.3" fill="#1b1c30"/>
<path d="M141.9 1141.3 L148.2 1146.9 L141.9 1152.6000000000001" fill="none" stroke="#f0f0f0" stroke-width="2"/>
<rect x="160" y="1139" width="16" height="16" rx="1.5" fill="none" stroke="#b4b4b4" stroke-width="2"/>
<text x="202.50 211.24 219.98 228.71 237.45 242.69 251.42 260.16 265.39 274.13 282.87 287.24 295.97 304.71 309.08 317.82 326.55 330.92 339.66" y="1151.7" font-size="16" fill="#f0f0f0" font-weight="normal" >2025-06-10 18:01:05</text>
<text x="445.80 454.52 463.24 467.60 476.32 480.67 489.39 498.12 506.84 511.19" y="1151.7" font-size="16" fill="#f0f0f0" font-weight="normal" >10.4.100.6</text>
<text x="652.5" y="1151.7" font-size="16" fill="#f0f0f0" font-weight="normal" text-anchor="start" >Good</text>
<text x="1120.5" y="1151.7" font-size="16" fill="#f0f0f0" font-weight="normal" text-anchor="start" >10.33.1.48</text>
<text x="1327.5" y="1151.7" font-size="16" fill="#f0f0f0" font-weight="normal" text-anchor="start" >Good</text>
<circle cx="1614.2" cy="1147.9" r="8.8" fill="#1e8bff"/><rect x="1613.1" y="1147.2" width="2.1" height="4.7" fill="#1b1c30"/><rect x="1613.1" y="1144.0" width="2.1" height="1.3" fill="#1b1c30"/>
<path d="M141.9 1186.3 L148.2 1191.9 L141.9 1197.6000000000001" fill="none" stroke="#f0f0f0" stroke-width="2"/>
<rect x="160" y="1184" width="16" height="16" rx="1.5" fill="none" stroke="#b4b4b4" stroke-width="2"/>
<text x="202.50 211.24 219.98 228.71 237.45 242.69 251.42 260.16 265.39 274.13 282.87 287.24 295.97 304.71 309.08 317.82 326.55 330.92 339.66" y="1196.7" font-size="16" fill="#f0f0f0" font-weight="normal" >2025-06-10 13:25:35</text>
<text x="445.80 454.52 463.24 467.60 476.32 480.67 489.39 498.12 506.84 511.19" y="1196.7" font-size="16" fill="#f0f0f0" font-weight="normal" >10.4.100.6</text>
<text x="652.5" y="1196.7" font-size="16" fill="#f0f0f0" font-weight="normal" text-anchor="start" >Good</text>
<text x="1120.5" y="1196.7" font-size="16" fill="#f0f0f0" font-weight="normal" text-anchor="start" >10.33.1.48</text>
<text x="1327.5" y="1196.7" font-size="16" fill="#f0f0f0" font-weight="normal" text-anchor="start" >Good</text>
<circle cx="1614.2" cy="1192.9" r="8.8" fill="#1e8bff"/><rect x="1613.1" y="1192.2" width="2.1" height="4.7" fill="#1b1c30"/><rect x="1613.1" y="1189.0" width="2.1" height="1.3" fill="#1b1c30"/>
</svg>
</body></html>
